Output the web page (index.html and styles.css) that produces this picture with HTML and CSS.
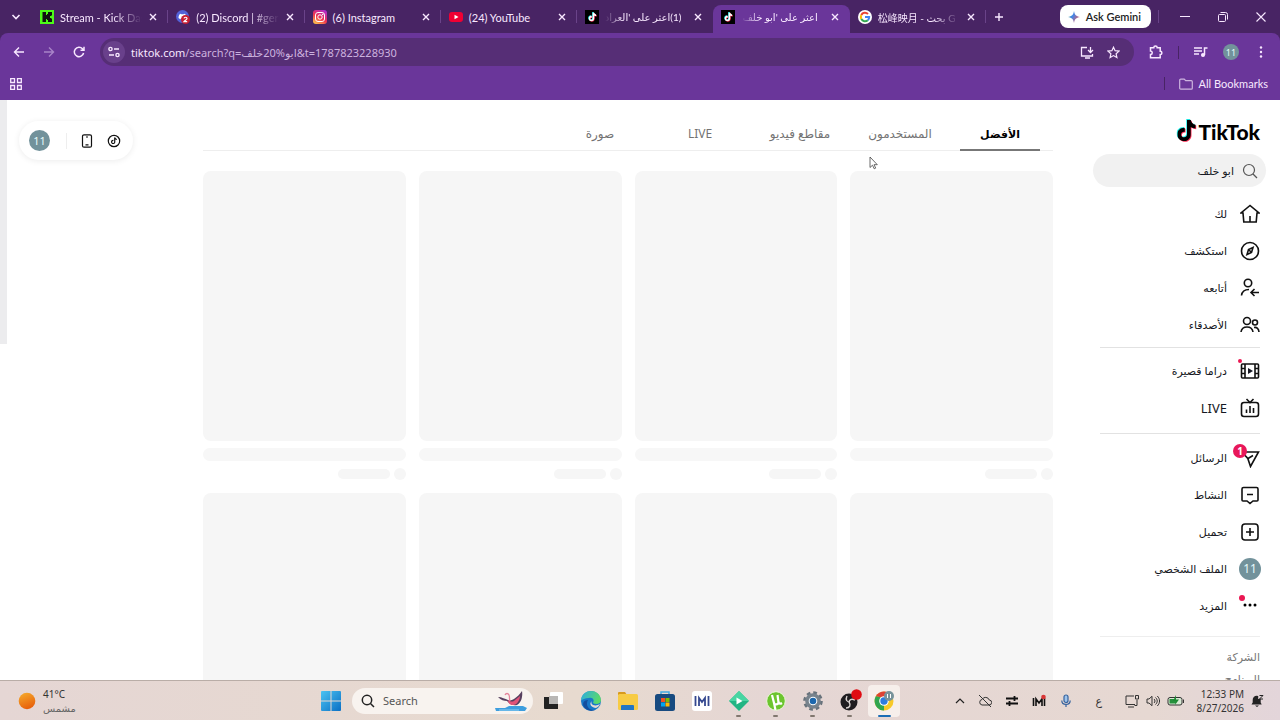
FILE: index.html
```
<!DOCTYPE html>
<html lang="ar">
<head>
<meta charset="utf-8">
<title>TikTok</title>
<link rel="stylesheet" href="styles.css">
</head>
<body>
<svg class="defs" width="0" height="0">
  <symbol id="close" viewBox="0 0 10 10"><path d="M2 2l6 6M8 2l-6 6" stroke="currentColor" stroke-width="1.4" fill="none"/></symbol>
  <symbol id="note" viewBox="0 0 24 28"><path d="M12.500 0h4.800c.4 3.500 2.600 6 6.200 6.300v4.800c-2.300 0-4.400-.7-6.200-1.900v9.700c0 5-3.900 8.600-8.500 8.600S0 24 0 19c0-5.200 4.300-9 9.600-8.500v5c-2.600-.7-4.800 1-4.800 3.400 0 2.200 1.700 3.800 3.900 3.800s3.800-1.700 3.800-4z"/></symbol>
  <symbol id="tiktok" viewBox="0 0 14 14"><rect width="14" height="14" fill="#000"/><use href="#note" x="3" y="2" width="8" height="9" fill="#25f4ee"/><use href="#note" x="4" y="3" width="8" height="9" fill="#fe2c55"/><use href="#note" x="3.500" y="2.500" width="8" height="9" fill="#fff"/></symbol>
</svg>

<header class="browser">
  <div class="strip">
    <button class="bare tab-list" aria-label="Search tabs"><svg width="10" height="10" viewBox="0 0 10 10"><path d="M1.500 3l3.500 3.500L8.500 3" fill="none" stroke="currentColor" stroke-width="1.600"/></svg></button>
    <div class="tabs">
      <div class="tab">
        <svg class="fav" viewBox="0 0 14 14"><rect width="14" height="14" fill="#4dfb18"/><path d="M2.500 2h3.500v3h1V4h1V2h4v3.500h-1V6h-1v2h1v.5h1V12H8v-2H7V9H6v3H2.500z" fill="#111"/></svg>
        <span class="title fade">Stream - Kick Das</span>
        <button class="bare" aria-label="Close"><svg width="10" height="10"><use href="#close"/></svg></button>
      </div>
      <div class="tab">
        <svg class="fav" viewBox="0 0 14 14"><circle cx="6.500" cy="6.500" r="6.500" fill="#5362d8"/><path d="M2.500 8c0-2 .8-4 2-4.300l1 .6h2l1-.6c1.200.3 2 2.300 2 4.300l-1.800 1.300-.7-.8H5l-.7.8z" fill="#fff"/><circle cx="9.500" cy="9.500" r="4.500" fill="#c81e32"/><path d="M8 8.300c.3-1.400 3-1.400 3 .1 0 1-2 2-3 3.300h3.200" fill="none" stroke="#fff" stroke-width="1.200"/></svg>
        <span class="title fade">(2) Discord | #ger</span>
        <button class="bare" aria-label="Close"><svg width="10" height="10"><use href="#close"/></svg></button>
      </div>
      <div class="tab">
        <svg class="fav" viewBox="0 0 14 14"><defs><linearGradient id="ig" x1="0.200" y1="1" x2="0.800" y2="0"><stop offset="0" stop-color="#fdc04a"/><stop offset=".45" stop-color="#f0324f"/><stop offset="1" stop-color="#b02bd0"/></linearGradient></defs><rect width="14" height="14" rx="3" fill="url(#ig)"/><rect x="2.500" y="2.500" width="9" height="9" rx="2.500" fill="none" stroke="#fff"/><circle cx="7" cy="7" r="2.200" fill="none" stroke="#fff"/><circle cx="9.700" cy="4.400" r=".7" fill="#fff"/></svg>
        <span class="title">(6) Instagram</span>
        <button class="bare" aria-label="Close"><svg width="10" height="10"><use href="#close"/></svg></button>
      </div>
      <div class="tab">
        <svg class="fav" viewBox="0 0 14 14"><rect y="2" width="14" height="10" rx="3" fill="#f00033"/><path d="M5.500 4.700v4.600L9.500 7z" fill="#fff"/></svg>
        <span class="title">(24) YouTube</span>
        <button class="bare" aria-label="Close"><svg width="10" height="10"><use href="#close"/></svg></button>
      </div>
      <div class="tab before-active">
        <svg class="fav"><use href="#tiktok"/></svg>
        <span class="title fade" dir="rtl">(1)اعثر على 'العراد</span>
        <button class="bare" aria-label="Close"><svg width="10" height="10"><use href="#close"/></svg></button>
      </div>
      <div class="tab active">
        <svg class="fav"><use href="#tiktok"/></svg>
        <span class="title fade" dir="rtl">اعثر على 'ابو خلف</span>
        <button class="bare" aria-label="Close"><svg width="10" height="10"><use href="#close"/></svg></button>
      </div>
      <div class="tab">
        <svg class="fav" viewBox="0 0 14 14"><circle cx="7" cy="7" r="7" fill="#fff"/><g fill="none" stroke-width="2"><path d="M10 4A4.200 4.200 0 0 0 3.300 5" stroke="#ea4335"/><path d="M3.300 5a4.200 4.200 0 0 0 0 4" stroke="#fbbc05"/><path d="M3.300 9A4.200 4.200 0 0 0 9.800 10.200" stroke="#34a853"/><path d="M9.800 10.200A4.200 4.200 0 0 0 11.200 7H7" stroke="#4285f4"/></g></svg>
        <span class="title fade small-text">松峰映月 - بحث G</span>
        <button class="bare" aria-label="Close"><svg width="10" height="10"><use href="#close"/></svg></button>
      </div>
    </div>
    <button class="bare new-tab" aria-label="New tab"><svg width="10" height="10" viewBox="0 0 10 10"><path d="M5 1v8M1 5h8" stroke="currentColor" stroke-width="1.400"/></svg></button>
    <button class="gemini"><svg width="12" height="12" viewBox="0 0 12 12"><defs><linearGradient id="gm" x1="0" x2="1" y2=".6"><stop offset="0" stop-color="#45ad62"/><stop offset=".45" stop-color="#3f86ea"/><stop offset="1" stop-color="#e25a62"/></linearGradient></defs><path d="M6 0c.6 3.800 2.200 5.400 6 6-3.800.6-5.400 2.200-6 6-.6-3.800-2.200-5.400-6-6 3.800-.6 5.400-2.200 6-6z" fill="url(#gm)"/></svg>Ask Gemini</button>
    <i class="sep"></i>
    <div class="window">
      <button class="bare" aria-label="Minimize"><svg width="10" height="10"><path d="M0 4.500h10" stroke="currentColor"/></svg></button>
      <button class="bare" aria-label="Restore"><svg width="10" height="10" viewBox="0 0 10 10" fill="none" stroke="currentColor"><rect x=".5" y="2.500" width="7" height="7" rx="1"/><path d="M2.500.5h5a2 2 0 0 1 2 2v5"/></svg></button>
      <button class="bare" aria-label="Close window"><svg width="10" height="10" viewBox="0 0 10 10"><path d="M.5.500l9 9M9.500.500l-9 9" stroke="currentColor" stroke-width="1.100"/></svg></button>
    </div>
  </div>

  <div class="toolbar">
    <button class="bare" aria-label="Back"><svg width="12" height="12" viewBox="0 0 12 12" fill="none" stroke="currentColor" stroke-width="1.400"><path d="M11 6H2M6 1.500L1.500 6 6 10.500"/></svg></button>
    <button class="bare dim" aria-label="Forward"><svg width="12" height="12" viewBox="0 0 12 12" fill="none" stroke="currentColor" stroke-width="1.400"><path d="M1 6h9M6 1.500L10.500 6 6 10.500"/></svg></button>
    <button class="bare" aria-label="Reload"><svg width="12" height="12" viewBox="0 0 12 12" fill="none" stroke="currentColor" stroke-width="1.500"><path d="M10.600 7A4.700 4.700 0 1 1 9.500 2.800L10.800 4M11 .8v3.500H7.500"/></svg></button>
    <div class="omnibox">
      <button class="bare site" aria-label="Site information"><svg width="12" height="12" viewBox="0 0 12 12" fill="none" stroke="currentColor" stroke-width="1.400"><circle cx="2.500" cy="3" r="1.600"/><path d="M6 3h5M1 9h5"/><circle cx="9.500" cy="9" r="1.600"/></svg></button>
      <label for="url">tiktok.com</label>
      <input id="url" type="text" dir="ltr" value="/search?q=ابو%20خلف&amp;t=1787823228930">
      <button class="bare" aria-label="Install"><svg width="14" height="13" viewBox="0 0 14 13" fill="none" stroke="currentColor" stroke-width="1.300"><path d="M7 1.500H1.500v8.500h11V8M5 12h5M10.500 1v5M8 4l2.500 2.500L13 4"/></svg></button>
      <button class="bare" aria-label="Bookmark"><svg width="13" height="13" viewBox="0 0 13 13" fill="none" stroke="currentColor" stroke-width="1.200"><path d="M6.500 1.200l1.600 3.500 3.900.4-2.900 2.600.8 3.900-3.400-2-3.400 2 .8-3.900L1 5.100l3.900-.4z"/></svg></button>
    </div>
    <button class="bare" aria-label="Extensions"><svg width="14" height="14" viewBox="0 0 14 14" fill="none" stroke="currentColor" stroke-width="1.500"><path d="M1.500 2.700h3.300a1.700 1.700 0 0 1 3.400 0h3V6.200a1.700 1.700 0 0 1 0 3.400v3.200H1.500V9.600a1.700 1.700 0 0 0 0-3.500z"/></svg></button>
    <i class="sep dark"></i>
    <button class="bare" aria-label="Media"><svg width="14" height="12" viewBox="0 0 14 12" fill="none" stroke="currentColor" stroke-width="1.500"><path d="M0 2h8M0 5h8M0 8h5M10.500 9V2h3"/><circle cx="9" cy="9" r="1.300" fill="currentColor"/></svg></button>
    <button class="bare avatar small" aria-label="Profile">11</button>
    <button class="bare" aria-label="Menu"><svg width="4" height="12" viewBox="0 0 4 12" fill="currentColor"><circle cx="2" cy="1.500" r="1.200"/><circle cx="2" cy="6" r="1.200"/><circle cx="2" cy="10.500" r="1.200"/></svg></button>
  </div>

  <div class="bookmarks">
    <button class="bare" aria-label="Apps"><svg width="12" height="12" viewBox="0 0 12 12" fill="none" stroke="currentColor" stroke-width="1.300"><path d="M.7.700h3.800v3.800H.7zM7.500.700h3.800v3.800H7.500zM.7 7.500h3.800v3.800H.7zM7.500 7.500h3.800v3.800H7.500z"/></svg></button>
    <i class="sep dark"></i>
    <button class="bare all"><svg width="14" height="12" viewBox="0 0 14 12" fill="none" stroke="#cdb5df" stroke-width="1.200"><path d="M.7 2.200a1 1 0 0 1 1-1h3.500l1.500 1.500h5.600a1 1 0 0 1 1 1v6.500a1 1 0 0 1-1 1H1.700a1 1 0 0 1-1-1z"/></svg>All Bookmarks</button>
  </div>
</header>

<div class="page" dir="rtl">
  <aside class="sidebar">
    <a class="logo" href="#" dir="ltr"><svg width="22" height="24" viewBox="-1 -1 27 31"><use href="#note" x="-1" y="-1" width="24" height="28" fill="#25f4ee"/><use href="#note" x="1" y="1" width="24" height="28" fill="#fe2c55"/><use href="#note" width="24" height="28"/></svg><span>TikTok</span></a>
    <div class="search">
      <label for="q" aria-label="بحث"><svg width="16" height="16" viewBox="0 0 16 16" fill="none" stroke="#555" stroke-width="1.200"><circle cx="7" cy="7" r="5.500"/><path d="M11 11l4 4"/></svg></label>
      <input id="q" type="text" value="ابو خلف">
    </div>
    <nav>
      <div class="group">
        <a href="#"><svg viewBox="0 0 20 20"><path d="M10 1.500L1 9h2l.8 9h12.400l.8-9h2zM10 12v6"/></svg>لك</a>
        <a href="#"><svg viewBox="0 0 20 20"><circle cx="10" cy="10" r="8.500"/><path d="M13 6.500l-1.500 5L7 13.500l1.500-5zM9 9l2.500 2.500"/></svg>استكشف</a>
        <a href="#"><svg viewBox="0 0 20 20"><circle cx="8" cy="5" r="3.700"/><path d="M1.500 17.500c.5-4 3-6 7.500-6M19 14.500h-7.500M14.500 11l-3.500 3.500 3.500 3.500"/></svg>أتابعه</a>
        <a href="#"><svg viewBox="0 0 20 20"><circle cx="7" cy="6" r="3.500"/><path d="M1 17c.5-3.500 2.500-5 6-5s5.500 1.500 6 5M14 12.500c3-.5 4.700 1.200 5 4.500"/><circle cx="15" cy="7.500" r="2.500"/></svg>الأصدقاء</a>
      </div>
      <div class="group">
        <a href="#"><svg viewBox="0 0 20 20"><rect x="1.500" y="3" width="17" height="14" rx="1"/><path d="M5 3v14M15 3v14M1.500 7.500H5M1.500 12.500H5M15 7.500h3.500M15 12.500h3.500"/><path d="M8 7v6l5-3z" fill="#161823" stroke="none"/></svg><b class="dot drama"></b>دراما قصيرة</a>
        <a class="latin" href="#"><svg viewBox="0 0 20 20"><rect x="1.500" y="4.500" width="17" height="14" rx="2.500"/><path d="M6.500 1l3.500 3.500L13.500 1M6.500 11.500V15M10 8v7M13.500 10v5"/></svg>LIVE</a>
      </div>
      <div class="group">
        <a href="#"><svg viewBox="0 0 20 20"><path d="M2 4h16.500l-8 14.500-2.700-8zM8 10.500L13 7.500"/></svg><b class="count">1</b>الرسائل</a>
        <a href="#"><svg viewBox="0 0 20 20"><path d="M3.500 2.500h13a1.500 1.500 0 0 1 1.500 1.500v11a1 1 0 0 1-1 1h-4l-3 2.500L7 16H3a1 1 0 0 1-1-1V4a1.500 1.500 0 0 1 1.500-1.500zM7 9.500h6"/></svg>النشاط</a>
        <a href="#"><svg viewBox="0 0 20 20"><rect x="2" y="2" width="16" height="16" rx="3"/><path d="M10 6v8M6 10h8"/></svg>تحميل</a>
        <a href="#"><span class="avatar profile">11</span>الملف الشخصي</a>
        <a href="#"><svg viewBox="0 0 20 20"><g fill="#000" stroke="none"><circle cx="5" cy="9" r="1.500"/><circle cx="10" cy="9" r="1.500"/><circle cx="15" cy="9" r="1.500"/></g></svg><b class="dot more"></b>المزيد</a>
      </div>
    </nav>
    <footer>
      <a href="#">الشركة</a>
      <a href="#">البرنامج</a>
    </footer>
  </aside>

  <main>
    <div class="filters">
      <button class="on">الأفضل</button>
      <button>المستخدمون</button>
      <button>مقاطع فيديو</button>
      <button>LIVE</button>
      <button>صورة</button>
    </div>
    <div class="grid">
      <div class="card"><div class="thumb"></div><div class="line"></div><div class="by"><i></i><i></i></div></div>
      <div class="card"><div class="thumb"></div><div class="line"></div><div class="by"><i></i><i></i></div></div>
      <div class="card"><div class="thumb"></div><div class="line"></div><div class="by"><i></i><i></i></div></div>
      <div class="card"><div class="thumb"></div><div class="line"></div><div class="by"><i></i><i></i></div></div>
      <div class="card"><div class="thumb"></div></div>
      <div class="card"><div class="thumb"></div></div>
      <div class="card"><div class="thumb"></div></div>
      <div class="card"><div class="thumb"></div></div>
    </div>
  </main>

  <div class="scroll"><div class="thumb-bar"></div></div>

  <div class="actions" dir="ltr">
    <button class="bare avatar mid" aria-label="Profile">11</button>
    <i></i>
    <button class="bare" aria-label="Get app"><svg width="14" height="14" viewBox="0 0 14 14" fill="none" stroke="#111" stroke-width="1.200"><rect x="2.500" y=".8" width="9" height="12.400" rx="1.500"/><path d="M6 3h2M5.500 10.800h3"/></svg></button>
    <button class="bare" aria-label="Coins"><svg width="14" height="14" viewBox="0 0 14 14" fill="none" stroke="#111" stroke-width="1.200"><circle cx="7" cy="7" r="5.700"/><use href="#note" x="4" y="3.200" width="6" height="7" fill="#111" stroke="none"/></svg></button>
  </div>
  <svg class="pointer" viewBox="0 0 9 14"><path d="M1 1v10.500l2.500-2.300 1.700 3.600 1.500-.7L5 8.700h3.300z" fill="#fff" stroke="#444" stroke-width=".8"/></svg>
</div>

<div class="taskbar">
  <div class="weather">
    <svg width="18" height="18" viewBox="0 0 18 18"><defs><linearGradient id="sun" x2=".4" y2="1"><stop offset="0" stop-color="#f6ae2d"/><stop offset="1" stop-color="#e8620c"/></linearGradient></defs><circle cx="9" cy="9" r="8.300" fill="url(#sun)"/></svg>
    <div><p>41°C</p><p class="sub">مشمس</p></div>
  </div>
  <div class="apps">
    <button class="bare app" aria-label="Start"><svg width="20" height="20" viewBox="0 0 20 20"><defs><linearGradient id="win" x2="1" y2="1"><stop offset="0" stop-color="#4cc3f2"/><stop offset="1" stop-color="#0a6fc4"/></linearGradient></defs><path d="M1 0h8.500v9.500H0V1a1 1 0 0 1 1-1zM10.500 0H19a1 1 0 0 1 1 1v8.500h-9.500zM0 10.500h9.500V20H1a1 1 0 0 1-1-1zM10.500 10.500H20V19a1 1 0 0 1-1 1h-8.500z" fill="url(#win)"/></svg></button>
    <div class="find">
      <label for="find" aria-label="Search"><svg width="14" height="14" viewBox="0 0 14 14" fill="none" stroke="#222" stroke-width="1.500"><circle cx="6" cy="6" r="4.700"/><path d="M9.500 9.500L13 13"/></svg></label>
      <input id="find" type="text" placeholder="Search">
      <svg width="34" height="22" viewBox="0 0 34 22"><path d="M1 18h10l4-2h14l4 2-2 3H2z" fill="#3e9ede"/><path d="M5 20h20" stroke="#8fd0f2"/><path d="M4 7c4 0 7 2 10 3 2 1 4 0 6-1 3-2 6-5 8-8 1 6-1 12-5 14-4 1-7-1-10-4-3 0-6-1-9-4z" fill="#57405f"/><path d="M14 10c3 2 5 2 7 0l5-4c0 4-3 9-7 9-3 0-5-2-5-5z" fill="#e25378"/><path d="M16 11c-1-2 0-4-1-6s-3-2-4 0" fill="none" stroke="#e5849a" stroke-width="1.300"/></svg>
    </div>
    <button class="bare app" aria-label="Task view"><svg width="20" height="20" viewBox="0 0 20 20"><rect x="6" y="1" width="13" height="12" rx="1" fill="#fff"/><path d="M0 6h14v12H1a1 1 0 0 1-1-1z" fill="#222"/><path d="M5 5h9v8H5z" fill="#b9b7b5"/></svg></button>
    <button class="bare app" aria-label="Edge"><svg width="20" height="20" viewBox="0 0 20 20"><defs><linearGradient id="edge" x2="1" y2=".3"><stop offset="0" stop-color="#2cabe2"/><stop offset="1" stop-color="#59d96c"/></linearGradient></defs><circle cx="10" cy="10" r="10" fill="#1878c8"/><path d="M0 9C1-3 19-3 20 9c0 4-5 5-8 3 2-4-1-6-4-5-4 0-7 2-8 2z" fill="url(#edge)"/><path d="M11 10c-1 1-1 3 1 4 3 1 5 0 7-1-1 2-2 3-4 4-4 0-8-4-4-7z" fill="#e5d9d4"/><path d="M7 9c-3 5 1 11 7 10-3 1-6 1-9-1-5-4-3-9 2-9z" fill="#134e9e"/></svg></button>
    <button class="bare app" aria-label="Explorer"><svg width="22" height="18" viewBox="0 0 22 18"><path d="M1 1a1 1 0 0 1 1-1h6l2 3H1z" fill="#d89a1d"/><rect x="1" y="2" width="20" height="16" rx="1.500" fill="#f7cb45"/><path d="M5 13h11a1 1 0 0 1 1 1v4H4v-4a1 1 0 0 1 1-1z" fill="#2276c4"/></svg></button>
    <button class="bare app" aria-label="Store"><svg width="20" height="20" viewBox="0 0 20 20"><path d="M6 5V1h8v4" fill="none" stroke="#42a9e2" stroke-width="1.500"/><rect y="3" width="20" height="17" rx="2.500" fill="#174a80"/><path d="M6 7h4v4H6z" fill="#f25022"/><path d="M10.500 7h4v4h-4z" fill="#7fba00"/><path d="M6 11.500h4v4H6z" fill="#00a4ef"/><path d="M10.500 11.500h4v4h-4z" fill="#ffb900"/></svg></button>
    <button class="bare app" aria-label="Mixer"><svg width="20" height="20" viewBox="0 0 20 20"><rect width="20" height="20" rx="3" fill="#fff"/><path d="M3.500 5v10M16.500 5v10M7 15V7l3 4 3-4v8" fill="none" stroke="#35488f" stroke-width="1.800"/></svg></button>
    <button class="bare app run" aria-label="Filmora"><svg width="22" height="22" viewBox="0 0 22 22"><path d="M11 1l10 10-10 10L1 11z" fill="#22b583"/><path d="M11 1l10 10H1z" fill="#48d5a2"/><path d="M8.500 7.500v7l6-3.500z" fill="#fff"/></svg></button>
    <button class="bare app run" aria-label="Torrent"><svg width="20" height="20" viewBox="0 0 20 20"><circle cx="10" cy="10" r="9.300" fill="#6cc52f" stroke="#eef5dd"/><path d="M6 4l2 8c.5 2 4 2 4.500-.5L11.500 4M12.500 11c.5 2 2 2 3.500 1M8 12l1.500 7" fill="none" stroke="#fff" stroke-width="2.200"/></svg></button>
    <button class="bare app run" aria-label="Settings"><svg width="20" height="20" viewBox="0 0 20 20"><circle cx="10" cy="10" r="8.300" fill="none" stroke="#68727b" stroke-width="3" stroke-dasharray="3.600 2.920"/><circle cx="10" cy="10" r="7.800" fill="#77828c"/><circle cx="10" cy="10" r="4.300" fill="#fff"/><circle cx="10" cy="10" r="3.300" fill="#1c67ad"/></svg></button>
    <button class="bare app run" aria-label="OBS"><svg width="24" height="24" viewBox="0 0 24 24"><circle cx="11" cy="13" r="8.500" fill="#1f1d20"/><path d="M9 7c-2 4 0 6 3 6M17 11c-4-2-6 0-6 3M8 19c4 0 5-3 3-6" fill="none" stroke="#d8d2d0" stroke-width="1.400"/><circle cx="18.500" cy="5.500" r="5.300" fill="#e00b12"/></svg></button>
    <button class="bare app run current" aria-label="Chrome"><svg width="22" height="22" viewBox="0 0 22 22"><circle cx="11" cy="11" r="9.500" fill="#f7c928"/><path d="M11 11L2.800 6.300A9.500 9.500 0 0 0 11 20.500z" fill="#31a650"/><path d="M2.800 6.300a9.500 9.500 0 0 1 16.400 0L11 8z" fill="#dd4234"/><path d="M2.800 6.300L7 13l4-5z" fill="#31a650"/><circle cx="11" cy="11" r="4.800" fill="#fff"/><circle cx="11" cy="11" r="3.700" fill="#2d7ce0"/><circle cx="16" cy="6" r="5" fill="#78939a"/><path d="M14.500 4v4M17.500 4v4" stroke="#fff"/></svg></button>
  </div>
  <div class="tray">
    <button class="bare" aria-label="Hidden icons"><svg width="10" height="10" viewBox="0 0 10 10"><path d="M1 7l4-4 4 4" fill="none" stroke="#222" stroke-width="1.200"/></svg></button>
    <svg width="14" height="14" viewBox="0 0 14 14" fill="none" stroke="#333"><path d="M4 11h7a2.500 2.500 0 0 0 .3-5A4 4 0 0 0 4 5.500 2.800 2.800 0 0 0 4 11zM1 1l12 12"/></svg>
    <svg width="14" height="14" viewBox="0 0 14 14" stroke="#111" stroke-width="1.800"><path d="M1 4.500h12M1 9.500h12M9.500 2v5M4.500 7v5"/></svg>
    <svg width="14" height="14" viewBox="0 0 14 14" fill="none"><path d="M1.500 4v8M12.500 4v8M4 12V5l3 4 3-4v7" stroke="#111" stroke-width="1.600"/><circle cx="11.500" cy="3" r="2.300" fill="#d83535"/></svg>
    <svg width="14" height="14" viewBox="0 0 14 14" fill="none" stroke="#35629e" stroke-width="1.200"><rect x="5" y="1" width="4" height="7.500" rx="2" fill="#9ec4ec"/><path d="M2.800 6.500c0 5.200 8.400 5.200 8.400 0M7 10.500V13"/></svg>
    <span class="lang">ع</span>
    <button class="bare quick" aria-label="Quick settings">
      <svg width="14" height="14" viewBox="0 0 14 14" fill="none" stroke="#333"><path d="M9 2H1v8.500h9M3 13h6M12 6v5.500H9.500M10.500 1.500h3V5h-3z"/></svg>
      <svg width="14" height="14" viewBox="0 0 14 14" fill="none" stroke="#333"><path d="M1 5h2l3-2.700v9.400L3 9H1zM8 5c1.300 1 1.300 3 0 4M9.500 3.500c2.300 2 2.300 5 0 7M11.300 2c3 3 3 7 0 10"/></svg>
      <svg width="18" height="14" viewBox="0 0 18 14"><rect x="1" y="3.500" width="14" height="7.500" rx="2" fill="#d9ead5" stroke="#333"/><path d="M2.500 5H9v4.500H2.500z" fill="#26903c"/><path d="M16.500 5.500V9" stroke="#333"/><path d="M9 1L6 7h3l-1 4 4-5.500H9z" fill="#1c8a33"/></svg>
    </button>
    <div class="clock"><p>12:33 PM</p><p>8/27/2026</p></div>
    <svg width="14" height="14" viewBox="0 0 14 14"><path d="M1.500 10.500l1.200-2V6a4 4 0 0 1 4-4.300l1.500.3V5h2.500v3.500l1 2zM5 11.500h4L7 13z" fill="#222"/><path d="M9.500 1.500H13L9.500 5H13" fill="none" stroke="#222"/></svg>
  </div>
</div>
</body>
</html>
```
FILE: styles.css
```
* {
  box-sizing: border-box;
}
body {
  margin: 0;
  height: 100vh;
  display: flex;
  flex-direction: column;
  overflow: hidden;
  background: #fff;
  font-family: "Noto Sans", "DejaVu Sans", "Noto Sans CJK JP", sans-serif;
  font-size: 11px;
}
p { margin: 0; }
a { color: inherit; text-decoration: none; }
button, input { font: inherit; color: inherit; }
input { width: 100%; min-width: 0; border: 0; padding: 0; background: none; outline: none; }
svg { flex: none; }
.defs { position: absolute; }
.bare {
  display: flex;
  align-items: center;
  justify-content: center;
  flex: none;
  border: 0;
  padding: 0;
  background: none;
}

/* browser */
.browser {
  flex: none;
  background: #482464;
  color: #f8e8ff;
}
.strip, .bookmarks {
  font-family: Lato, "DejaVu Sans", "Noto Sans CJK JP", sans-serif;
}
.strip {
  display: flex;
  align-items: center;
  height: 33px;
}
.tab-list { width: 32px; }
.tabs {
  flex: 0 1 954px;
  min-width: 0;
  display: flex;
  align-self: stretch;
  padding-top: 5px;
}
.tab {
  position: relative;
  flex: 1 1 0;
  min-width: 0;
  display: flex;
  align-items: center;
  padding: 0 10px 4px 8px;
}
.tab:not(.active):not(.before-active)::after {
  content: "";
  position: absolute;
  right: 0;
  top: 5px;
  width: 1px;
  height: 13px;
  background: #6a4389;
}
.tab.active {
  background: #6a369a;
  border-radius: 8px 8px 0 0;
}
.fav { width: 14px; height: 14px; }
.title {
  flex: 1;
  min-width: 0;
  margin: 0 6px;
  white-space: nowrap;
}
.title[dir=rtl], .small-text { font-size: 10px; }
.title[dir=rtl] { margin-right: 12px; }
.fade { mask-image: linear-gradient(to right, #000 65%, transparent); }
.fade[dir=rtl] { mask-image: linear-gradient(to left, #000 75%, transparent); }
.new-tab { width: 26px; }
.gemini {
  display: flex;
  align-items: center;
  gap: 6px;
  height: 23px;
  margin-left: auto;
  padding: 0 10px 0 8px;
  border: 0;
  border-radius: 8px;
  background: #fff;
  color: #222;
  font-weight: 600;
  white-space: nowrap;
}
.sep {
  flex: none;
  width: 1px;
  height: 13px;
  margin-left: 7px;
  background: #6a4389;
}
.sep.dark { background: #482464; margin: 0; }
.window {
  display: flex;
  gap: 28px;
  padding: 0 14px 0 21px;
}
.toolbar {
  display: flex;
  align-items: center;
  gap: 15px;
  height: 38px;
  padding: 0 17px 0 13px;
  background: #6a369a;
  border-radius: 8px 8px 0 0;
}
.dim { margin: 0 3px; color: #a884c8; }
.omnibox {
  flex: 1;
  display: flex;
  align-items: center;
  height: 28px;
  padding: 0 14px 0 3px;
  border-radius: 14px;
  background: #562e76;
}
.omnibox .site {
  width: 22px;
  height: 22px;
  margin-right: 6px;
  border-radius: 50%;
  background: #69408b;
}
.omnibox input { flex: 1; color: #ccb2df; }
.omnibox .bare + .bare { margin-left: 13px; }
.avatar {
  display: flex;
  align-items: center;
  justify-content: center;
  border-radius: 50%;
  background: #72929b;
  color: #e4fafa;
}
.avatar.small { width: 16px; height: 16px; margin-right: 5px; font-size: 9px; }
.bookmarks {
  display: flex;
  align-items: center;
  gap: 14px;
  height: 29px;
  padding: 0 12px 4px 10px;
  background: #6a369a;
}
.bookmarks .sep { margin-left: auto; }
.all { gap: 6px; }

/* page */
.page {
  position: relative;
  flex: 1;
  min-height: 0;
  display: flex;
  overflow: hidden;
  color: #161823;
}
.sidebar {
  flex: 0 0 200px;
  min-width: 0;
  padding: 17px 20px 0;
}
.logo {
  display: flex;
  align-items: center;
  justify-content: flex-end;
  gap: 1px;
  height: 28px;
  color: #000;
  font: 900 21px Lato, sans-serif;
}
.search {
  display: flex;
  align-items: center;
  gap: 8px;
  height: 33px;
  margin: 9px -6px 8px -13px;
  margin: 9px -6px 8px -7px;
  padding: 0 8px;
  border-radius: 17px;
  background: #f1f1f1;
}
.search label { display: flex; }
.search input { flex: 1; }
.group {
  padding-bottom: 4px;
  border-bottom: 1px solid #e2e2e2;
}
.group + .group { padding: 4px 0 7px; }
.group + .group + .group { padding: 5px 0 12px; border-color: #eee; }
.group a {
  position: relative;
  display: flex;
  align-items: center;
  gap: 13px;
  height: 37px;
  white-space: nowrap;
}
.group a.latin { font-size: 13px; }
.group svg {
  width: 20px;
  height: 20px;
  fill: none;
  stroke: #111;
  stroke-width: 1.600;
}
.avatar.profile { width: 22px; height: 22px; margin: 0 -1px; font-size: 12px; }
.dot {
  position: absolute;
  right: 18px;
  top: 7px;
  width: 4px;
  height: 4px;
  border-radius: 50%;
  background: #ea1752;
}
.dot.more { right: 15px; top: 8px; width: 6px; height: 6px; }
.count {
  position: absolute;
  right: 13px;
  top: 5px;
  width: 14px;
  border-radius: 7px;
  background: #e8175a;
  color: #fff;
  font-size: 10px;
  line-height: 14px;
  text-align: center;
}
footer {
  display: flex;
  flex-direction: column;
  gap: 6px;
  padding-top: 12px;
  color: #777;
  line-height: 16px;
}
main {
  flex: 1;
  min-width: 0;
  margin-left: 7px;
  padding: 17px 27px 0 196px;
}
.filters {
  display: flex;
  padding-right: 3px;
  border-bottom: 1px solid #eee;
}
.filters button {
  position: relative;
  flex: 0 1 100px;
  height: 33px;
  border: 0;
  padding: 0;
  background: none;
  color: #737373;
  font-size: 12px;
  white-space: nowrap;
}
.filters .on { color: #000; font-size: 11px; font-weight: 600; }
.filters .on::after {
  content: "";
  position: absolute;
  left: 10px;
  right: 10px;
  bottom: -1px;
  height: 2px;
  background: #777;
}
.grid {
  display: grid;
  grid-template-columns: repeat(4, 1fr);
  gap: 13px;
  padding-top: 20px;
}
.thumb { aspect-ratio: 3 / 4; border-radius: 8px; background: #f6f6f6; }
.line { height: 13px; margin-top: 7px; border-radius: 7px; background: #f7f7f7; }
.by { display: flex; align-items: center; gap: 4px; margin-top: 7px; }
.by i { width: 12px; height: 12px; border-radius: 6px; background: #f6f6f6; }
.by i + i { width: 52px; height: 10px; }
.scroll {
  position: absolute;
  left: 0;
  top: 0;
  bottom: 0;
  width: 7px;
}
.thumb-bar { height: 42%; background: #ececee; }
.actions {
  position: absolute;
  left: 19px;
  top: 21px;
  display: flex;
  align-items: center;
  gap: 13px;
  height: 39px;
  padding: 0 12px 0 10px;
  border-radius: 20px;
  background: #fff;
  box-shadow: 0 1px 6px rgba(0, 0, 0, .08);
}
.actions i { width: 1px; height: 16px; margin-left: 3px; background: #eee; }
.avatar.mid { width: 21px; height: 21px; }
.pointer {
  position: absolute;
  left: 869px;
  top: 56px;
  width: 9px;
  height: 14px;
}

/* taskbar */
.taskbar {
  flex: none;
  display: flex;
  align-items: center;
  height: 40px;
  border-top: 1px solid #b9ada7;
  background: linear-gradient(to right, #e5d6d4, #e7dacf 45%, #e5d6d4 60%, #e6d8d2 90%, #e3d5da);
  color: #333;
}
.weather {
  flex: 0 1 312px;
  display: flex;
  align-items: center;
  gap: 7px;
  padding-left: 18px;
  line-height: 14px;
  font-size: 10px;
}
.weather .sub { color: #666; }
.apps { display: flex; align-items: center; height: 100%; }
.app {
  position: relative;
  width: 37px;
  height: 32px;
}
.find {
  display: flex;
  align-items: center;
  gap: 8px;
  width: 181px;
  height: 26px;
  margin: 0 2px 0 3px;
  padding: 0 5px 0 9px;
  border-radius: 13px;
  background: #f8f3ef;
}
.find label { display: flex; }
.find input { flex: 1; }
.find input::placeholder { color: #555; opacity: 1; }
.run::after {
  content: "";
  position: absolute;
  left: 16px;
  bottom: 0;
  width: 5px;
  height: 2px;
  border-radius: 1px;
  background: #81776f;
}
.current { width: 32px; border-radius: 4px; background: #f6efeb; }
.current::after { left: 10px; width: 13px; background: #1b6db5; }
.tray {
  display: flex;
  align-items: center;
  gap: 13px;
  margin-left: auto;
  padding-right: 16px;
}
.quick { gap: 7px; margin: 0 -1px 0 8px; }
.clock { text-align: right; line-height: 14px; font-size: 10px; white-space: nowrap; }
.clock + svg { margin-left: -7px; }
.lang { width: 8px; margin-left: 10px; }
```
